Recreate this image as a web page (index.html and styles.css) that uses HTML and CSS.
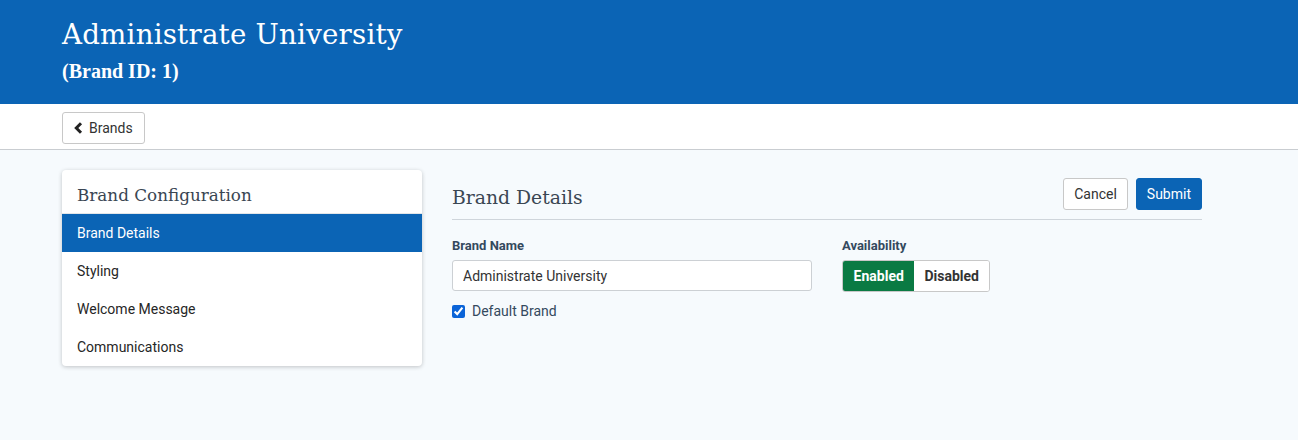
FILE: index.html
```html
<!DOCTYPE html>
<html>
<head>
<meta charset="utf-8">
<link rel="stylesheet" href="styles.css">
</head>
<body>
<header class="hero">
  <div class="wrap">
    <h1 class="hero-title">Administrate University</h1>
    <div class="hero-sub">(Brand ID: 1)</div>
  </div>
</header>
<div class="toolbar">
  <div class="wrap">
    <button class="btn btn-default back-btn"><svg class="chev" viewBox="0 0 9 12" width="9" height="12"><path d="M7 1.3 L2.3 6 L7 10.7" fill="none" stroke="#222" stroke-width="3" stroke-linejoin="miter"/></svg>Brands</button>
  </div>
</div>
<main class="main">
  <div class="wrap layout">
    <aside class="card">
      <div class="card-title">Brand Configuration</div>
      <ul class="nav">
        <li class="nav-item active">Brand Details</li>
        <li class="nav-item">Styling</li>
        <li class="nav-item">Welcome Message</li>
        <li class="nav-item">Communications</li>
      </ul>
    </aside>
    <section class="content">
      <div class="content-head">
        <h2 class="content-title">Brand Details</h2>
        <div class="actions">
          <button class="btn btn-default">Cancel</button>
          <button class="btn btn-primary">Submit</button>
        </div>
      </div>
      <div class="form-row">
        <div class="field name-field">
          <label class="label">Brand Name</label>
          <input class="input" type="text" value="Administrate University">
          <label class="check"><input type="checkbox" checked class="checkbox"> Default Brand</label>
        </div>
        <div class="field">
          <label class="label">Availability</label>
          <div class="toggle">
            <span class="toggle-opt on">Enabled</span>
            <span class="toggle-opt">Disabled</span>
          </div>
        </div>
      </div>
    </section>
  </div>
</main>
</body>
</html>
```
FILE: styles.css
```css
* { box-sizing: border-box; }
html, body { margin: 0; padding: 0; }
body {
  font-family: Roboto, "Liberation Sans", sans-serif;
  background: #f6fafd;
  color: #333;
  height: 440px;
  overflow: hidden;
}
.wrap { width: 1140px; margin: 0 0 0 62px; }
.hero { background: #0b64b5; height: 104px; color: #fff; }
.hero .wrap { padding-top: 17px; }
.hero-title {
  margin: 0;
  font-family: "DejaVu Serif", serif;
  font-weight: 300;
  font-size: 27.7px;
  line-height: 36px;
  letter-spacing: 0.2px;
}
.hero-sub {
  font-family: "Liberation Serif", serif;
  font-weight: bold;
  font-size: 20px;
  line-height: 26px;
  margin-top: 5px;
}
.toolbar { background: #fff; height: 46px; border-bottom: 1px solid #c9cdd1; }
.toolbar .wrap { padding-top: 8px; }
.btn {
  font-family: Roboto, "Liberation Sans", sans-serif;
  font-size: 14px;
  height: 32px;
  padding: 0 10px;
  border-radius: 3px;
  border: 1px solid #c8c8c8;
  background: #fff;
  color: #333;
  cursor: pointer;
}
.back-btn { display: inline-flex; align-items: center; gap: 6px; height: 32px; padding: 0 11px 0 11px; }
.chev { display: block; }
.btn-primary { background: #0b64b5; border-color: #0b64b5; color: #fff; }
.main { padding-top: 20px; }
.layout { display: flex; gap: 30px; align-items: flex-start; }
.card {
  width: 360px;
  background: #fff;
  border-radius: 4px;
  box-shadow: 0 1px 4px rgba(0,0,0,0.22);
  overflow: hidden;
}
.card-title {
  font-family: "DejaVu Serif", serif;
  font-weight: 300;
  font-size: 16.8px;
  color: #3a4653;
  height: 44px;
  line-height: 50px;
  padding-left: 15px;
  border-bottom: 1px solid #e3e6e9;
}
.nav { list-style: none; margin: 0; padding: 0; }
.nav-item { height: 38px; line-height: 38px; padding-left: 15px; font-size: 14px; color: #262626; }
.nav-item.active { background: #0b64b5; color: #fff; }
.content { flex: 1; }
.content-head {
  display: flex;
  justify-content: space-between;
  align-items: flex-start;
  border-bottom: 1px solid #cfd5db;
  height: 50px;
  padding-top: 8px;
}
.content-title {
  margin: 0;
  font-family: "DejaVu Serif", serif;
  font-weight: 300;
  font-size: 18.8px;
  color: #3a4653;
  line-height: 24px;
  padding-top: 8px;
}
.actions { display: flex; gap: 8px; }
.form-row { display: flex; gap: 30px; padding-top: 18px; }
.field { display: flex; flex-direction: column; }
.name-field { width: 360px; }
.label { font-size: 13px; font-weight: bold; color: #34495e; line-height: 16px; margin-bottom: 6px; }
.input {
  height: 31px;
  border: 1px solid #ccd0d4;
  border-radius: 3px;
  padding: 0 10px;
  font-family: Roboto, "Liberation Sans", sans-serif;
  font-size: 14px;
  color: #333;
  background: #fff;
}
.check { display: flex; align-items: center; gap: 3px; margin-top: 12px; font-size: 14px; color: #34495e; }
.checkbox { margin: 0 4px 0 0; width: 13px; height: 13px; accent-color: #0b64d8; }
.toggle { display: flex; border: 1px solid #c8c8c8; border-radius: 3px; overflow: hidden; height: 32px; width: 148px; }
.toggle-opt { display: flex; align-items: center; padding: 0 10px; font-size: 14px; font-weight: bold; color: #333; background: #fff; }
.toggle-opt.on { background: #0a7a43; color: #fff; width: 72px; justify-content: center; }
```
